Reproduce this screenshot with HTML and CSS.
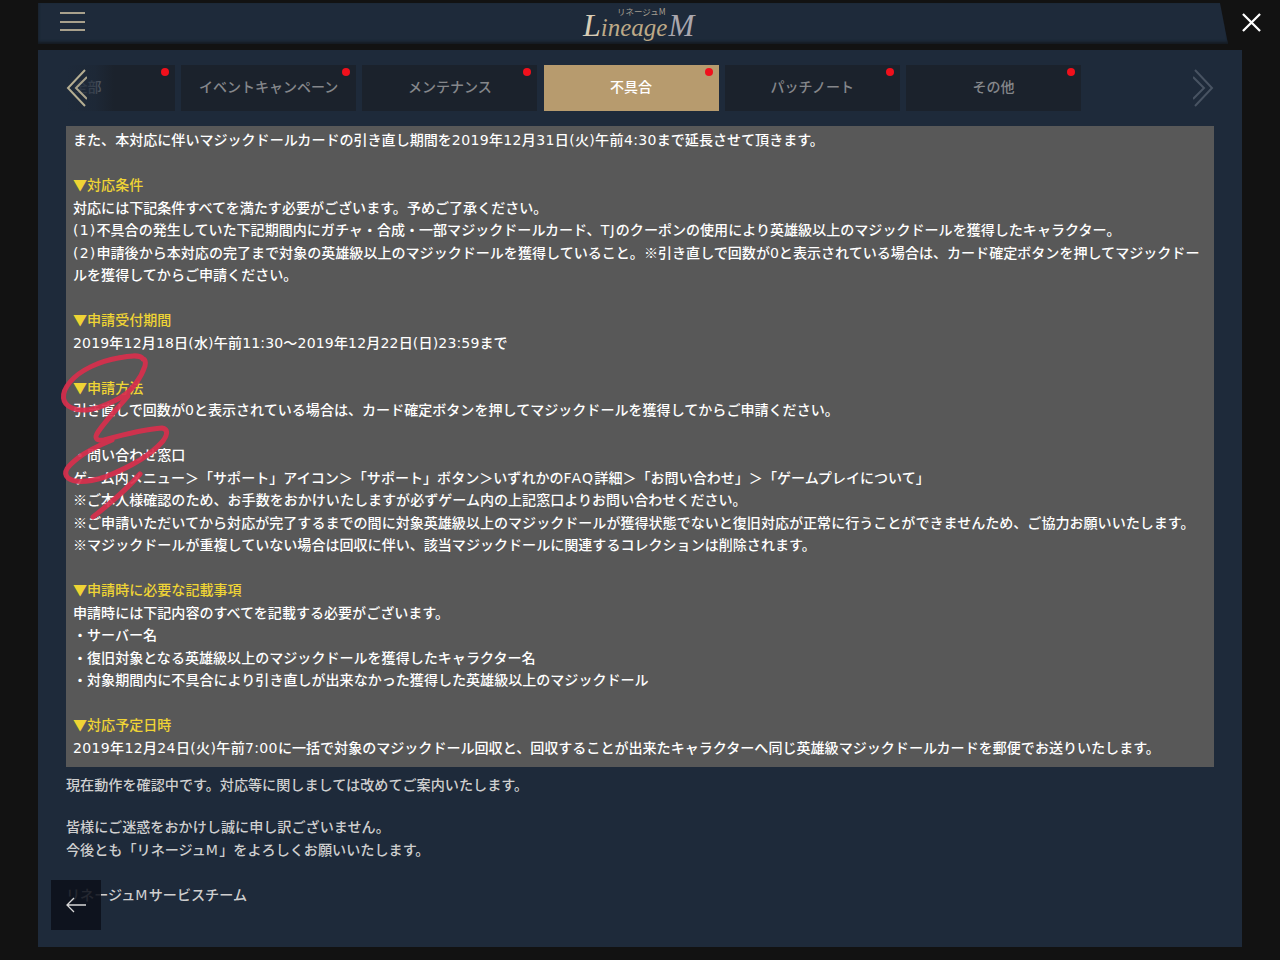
FILE: index.html
```html
<!DOCTYPE html>
<html lang="ja">
<head>
<meta charset="utf-8">
<title>リネージュM お知らせ</title>
<link rel="stylesheet" href="styles.css">
</head>
<body>
<div class="page">
  <header class="topbar">
    <button class="menu" aria-label="menu"><span></span><span></span><span></span></button>
    <div class="logo">
      <span class="logo-main"><span class="logo-l">L</span>ineage<span class="logo-m">M</span></span>
      <span class="logo-sub">リネージュM</span>
    </div>
  </header>
  <svg class="close" viewBox="0 0 20 20" aria-label="close"><path d="M1 1 L19 19 M19 1 L1 19"/></svg>
  <main class="panel">
    <nav class="tabs">
      <div class="tab first">全部<i class="dot"></i></div>
      <div class="tab">イベントキャンペーン<i class="dot"></i></div>
      <div class="tab">メンテナンス<i class="dot"></i></div>
      <div class="tab active">不具合<i class="dot"></i></div>
      <div class="tab">パッチノート<i class="dot"></i></div>
      <div class="tab">その他<i class="dot"></i></div>
      <div class="fade"></div>
      <svg class="arrow left" viewBox="0 0 22 38"><path class="a1" d="M20 1 L3 19 L20 37"/><path class="a2" d="M22 8 L11 19 L22 30"/></svg>
      <svg class="arrow right" viewBox="0 0 22 38"><path d="M2 1 L19 19 L2 37"/><path d="M0 8 L11 19 L0 30"/></svg>
    </nav>
    <section class="notice">
      <p>また、本対応に伴いマジックドールカードの引き直し期間を<span class="date">2019年12月31日(火)午前4:30</span>まで延長させて頂きます。</p>
      <p class="gap head"><span class="cjk">▼</span>対応条件</p>
      <p>対応には下記条件すべてを満たす必要がございます。予めご了承ください。</p>
      <p><span class="lat">(1)</span>不具合の発生していた下記期間内にガチャ・合成・一部マジックドールカード、<span class="lat">TJ</span>のクーポンの使用により英雄級以上のマジックドールを獲得したキャラクター。</p>
      <p><span class="lat">(2)</span>申請後から本対応の完了まで対象の英雄級以上のマジックドールを獲得していること。<span class="cjk">※</span>引き直しで回数が0と表示されている場合は、カード確定ボタンを押してマジックドールを獲得してからご申請ください。</p>
      <p class="gap head"><span class="cjk">▼</span>申請受付期間</p>
      <p><span class="range">2019年12月18日(水)午前11:30〜2019年12月22日(日)23:59</span>まで</p>
      <p class="gap head"><span class="cjk">▼</span>申請方法</p>
      <p>引き直しで回数が0と表示されている場合は、カード確定ボタンを押してマジックドールを獲得してからご申請ください。</p>
      <p class="gap">・問い合わせ窓口</p>
      <p>ゲーム内メニュー＞「サポート」アイコン＞「サポート」ボタン＞いずれかの<span class="lat">FAQ</span>詳細＞「お問い合わせ」＞「ゲームプレイについて」</p>
      <p><span class="cjk">※</span>ご本人様確認のため、お手数をおかけいたしますが必ずゲーム内の上記窓口よりお問い合わせください。</p>
      <p><span class="cjk">※</span>ご申請いただいてから対応が完了するまでの間に対象英雄級以上のマジックドールが獲得状態でないと復旧対応が正常に行うことができませんため、ご協力お願いいたします。</p>
      <p><span class="cjk">※</span>マジックドールが重複していない場合は回収に伴い、該当マジックドールに関連するコレクションは削除されます。</p>
      <p class="gap head"><span class="cjk">▼</span>申請時に必要な記載事項</p>
      <p>申請時には下記内容のすべてを記載する必要がございます。</p>
      <p>・サーバー名</p>
      <p>・復旧対象となる英雄級以上のマジックドールを獲得したキャラクター名</p>
      <p>・対象期間内に不具合により引き直しが出来なかった獲得した英雄級以上のマジックドール</p>
      <p class="gap head"><span class="cjk">▼</span>対応予定日時</p>
      <p><span class="date">2019年12月24日(火)午前7:00</span>に一括で対象のマジックドール回収と、回収することが出来たキャラクターへ同じ英雄級マジックドールカードを郵便でお送りいたします。</p>
    </section>
    <section class="after">
      <p>現在動作を確認中です。対応等に関しましては改めてご案内いたします。</p>
      <p class="gap">皆様にご迷惑をおかけし誠に申し訳ございません。</p>
      <p>今後とも「リネージュ<span class="lat">M</span>」をよろしくお願いいたします。</p>
      <p class="gap">リネージュ<span class="lat">M</span>サービスチーム</p>
    </section>
  </main>
  <button class="back" aria-label="back"><svg viewBox="0 0 20 16"><path d="M20 8 H1 M8 1 L1 8 L8 15"/></svg></button>
  <svg class="scribble" viewBox="0 0 1280 960" aria-hidden="true">
    <path d="M143 359 C140 354 128 356 118 358 C100 361 80 370 70 382 C60 394 62 404 72 408 C85 414 105 406 120 398 C132 391 141 378 145 366 C146 362 145 359 143 359"/>
    <path d="M128 396 C118 408 106 420 98 432 C94 438 96 441 104 440 C122 435 145 429 162 428 C168 429 168 434 163 441 C150 456 128 468 105 477 C92 481 76 484 68 478 C62 472 68 466 78 458 C88 450 100 445 112 440"/>
    <path d="M140 474 C128 488 112 502 93 517"/>
  </svg>
</div>
</body>
</html>
```

FILE: styles.css
```css
* { box-sizing: border-box; }
html, body { margin: 0; padding: 0; background: #121212; }
body {
  font-family: "DejaVu Sans", "Noto Sans CJK JP", sans-serif;
}
p { margin: 0; }

.page { position: relative; width: 1280px; height: 960px; overflow: hidden; padding: 3px 0 0 38px; }

.topbar {
  position: relative;
  width: 1190px;
  height: 41px;
  background: #1e2a3a;
  clip-path: polygon(0 0, 1182px 0, 1190px 100%, 0 100%);
  display: flex;
  align-items: center;
  justify-content: center;
  box-shadow: inset 0 -2px 3px #141a20;
}
.menu {
  position: absolute;
  left: 22px;
  top: 9px;
  width: 25px;
  height: 19px;
  padding: 0;
  border: 0;
  background: none;
  display: flex;
  flex-direction: column;
  justify-content: space-between;
}
.menu span { display: block; height: 2px; background: #a8a08c; }
.logo { position: relative; width: 120px; height: 36px; margin-left: 12px; text-align: center; }
.logo-sub {
  position: absolute;
  top: 1px;
  left: 38px;
  font-family: "Noto Sans CJK JP", sans-serif;
  font-size: 8.5px;
  line-height: 9px;
  color: #a39c90;
  white-space: nowrap;
}
.logo-main {
  position: absolute;
  top: 8px;
  left: 4px;
  font-family: "Liberation Serif", serif;
  font-style: italic;
  font-size: 25px;
  line-height: 22px;
  color: #bda987;
  white-space: nowrap;
}
.logo-l { font-size: 32px; line-height: 22px; color: #d8cdb6; }
.logo-m { font-size: 31px; line-height: 22px; margin-left: 1px; color: #a9a6ae; }

.close {
  position: absolute;
  left: 1242px;
  top: 13px;
  width: 19px;
  height: 19px;
  fill: none;
  stroke: #fff;
  stroke-width: 2.4;
}

.panel {
  width: 1204px;
  height: 897px;
  margin-top: 6px;
  padding: 15px 28px 0;
  background: #1e2a3a;
}

.tabs {
  position: relative;
  display: flex;
  gap: 6.2px;
  height: 46px;
  width: 1148px;
  margin-bottom: 15px;
  overflow: hidden;
}
.tab {
  position: relative;
  flex: 0 0 175px;
  height: 46px;
  background: #1b222c;
  color: #85878b;
  font-size: 14px;
  font-weight: 500;
  line-height: 44px;
  text-align: center;
}
.tab.first { margin-left: -66px; }
.tab.active { background: #b79b6e; color: #fff; }
.dot {
  position: absolute;
  top: 3px;
  right: 6px;
  width: 8px;
  height: 8px;
  border-radius: 50%;
  background: #f0101c;
}
.fade {
  position: absolute;
  left: 0;
  top: 0;
  width: 48px;
  height: 46px;
  background: linear-gradient(90deg, #1e2a3a 0%, rgba(30, 42, 58, 0.75) 60%, rgba(30, 42, 58, 0) 100%);
}
.arrow {
  position: absolute;
  top: 4px;
  width: 22px;
  height: 38px;
  fill: none;
  stroke-width: 2;
}
.arrow.left { left: -1px; stroke: #a9a38c; }
.arrow.left .a1 { stroke: #b5ae92; }
.arrow.right { left: 1127px; stroke: #485362; }

.notice {
  background: #585858;
  color: #fff;
  height: 641px;
  padding: 3px 7px;
  font-size: 14.06px;
  font-weight: 500;
  line-height: 22.5px;
}
.notice .gap { margin-top: 22.5px; }
.notice .head { color: #efd435; }
.cjk { font-family: "Noto Sans CJK JP", sans-serif; line-height: 0; }
.date { letter-spacing: 0.33px; }
.range { letter-spacing: 0.15px; }
.lat { letter-spacing: 1.2px; }

.after {
  color: #cfcfcf;
  font-size: 14.12px;
  font-weight: 500;
  line-height: 22.4px;
  padding-top: 7px;
}
.after .gap { margin-top: 20px; }
.after .gap:last-child { margin-top: 22.5px; }

.back {
  position: absolute;
  left: 51px;
  top: 880px;
  width: 50px;
  height: 50px;
  padding: 0;
  border: 0;
  background: rgba(12, 16, 26, 0.88);
  display: flex;
  align-items: center;
  justify-content: center;
}
.back svg {
  width: 20px;
  height: 16px;
  fill: none;
  stroke: #d8d8d8;
  stroke-width: 1.3;
}

.scribble {
  position: absolute;
  left: 0;
  top: 0;
  width: 1280px;
  height: 960px;
  fill: none;
  stroke: #d92f4d;
  stroke-width: 5;
  stroke-linecap: round;
  stroke-linejoin: round;
  opacity: 0.92;
  pointer-events: none;
}
```
